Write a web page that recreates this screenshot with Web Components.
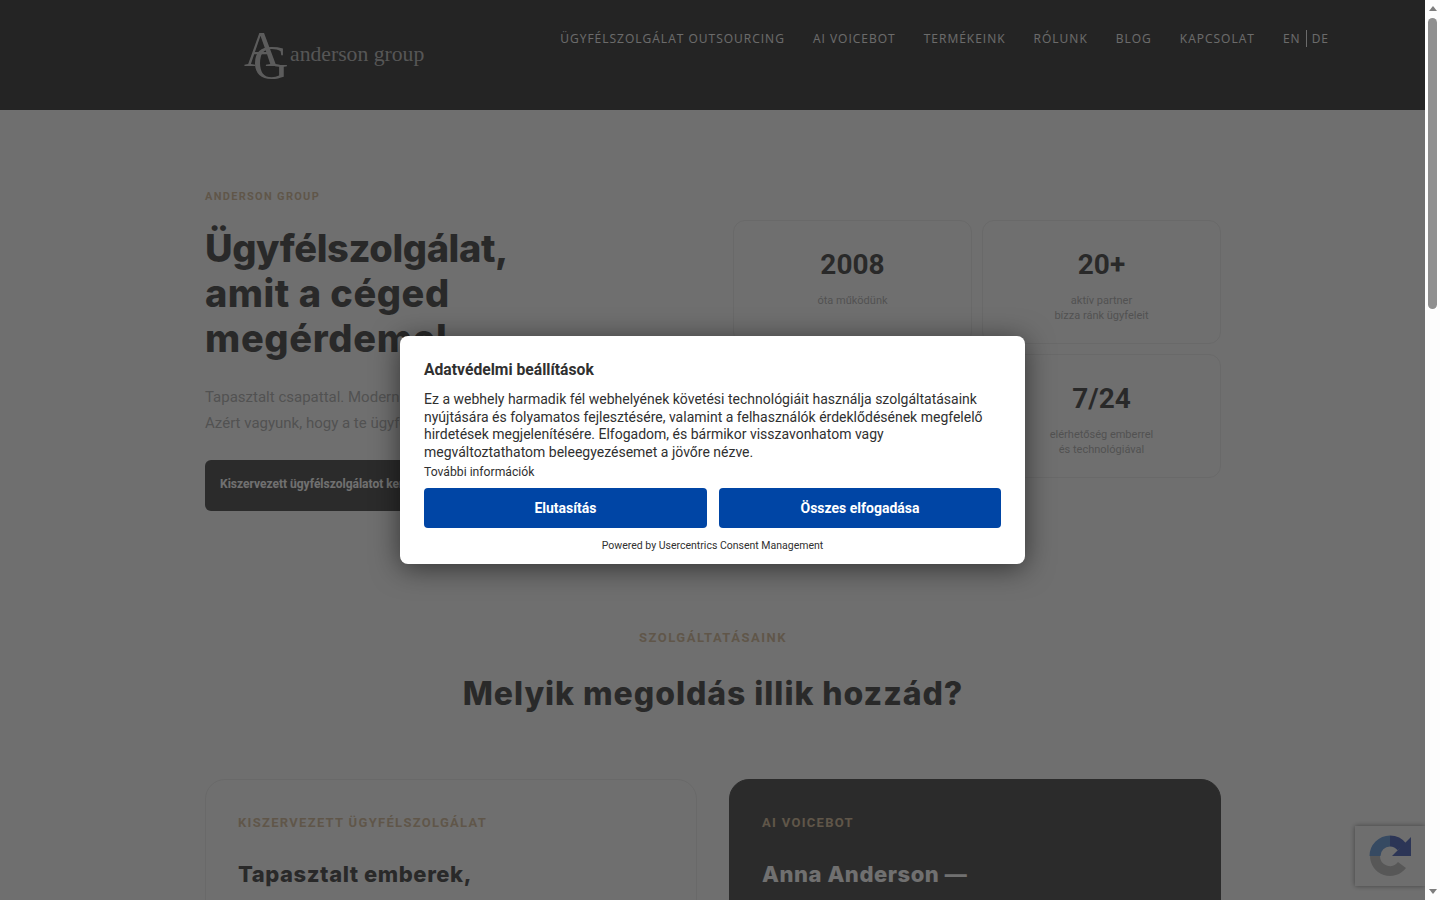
<!DOCTYPE html>
<html lang="hu">
<head>
<meta charset="utf-8">
<title>Anderson Group</title>
<style>
  html, body { margin: 0; height: 100%; overflow: hidden; background: #fff; }
</style>
</head>
<body>
<app-page>
  <site-header></site-header>
  <hero-section></hero-section>
  <services-section></services-section>
</app-page>

<script>
const HEAD_FONT = '"Inter", "Liberation Sans", sans-serif';

class AppPage extends HTMLElement {
  constructor() {
    super();
    this.attachShadow({ mode: "open" });
    this.shadowRoot.innerHTML = `
      <style>
        :host { display: flex; width: 1440px; height: 900px; overflow: hidden; font-family: Roboto, sans-serif; }
        .viewport { position: relative; width: 1425px; height: 900px; overflow: hidden; background: #fcfcfc; }
        .overlay { position: absolute; inset: 0; background: rgba(51,51,51,.7); }
      </style>
      <div class="viewport">
        <slot></slot>
        <recaptcha-badge></recaptcha-badge>
        <div class="overlay"></div>
        <consent-modal></consent-modal>
      </div>
      <page-scrollbar></page-scrollbar>
    `;
  }
}

class SiteHeader extends HTMLElement {
  constructor() {
    super();
    this.attachShadow({ mode: "open" });
    const links = ["ÜGYFÉLSZOLGÁLAT OUTSOURCING", "AI VOICEBOT", "TERMÉKEINK", "RÓLUNK", "BLOG", "KAPCSOLAT"];
    this.shadowRoot.innerHTML = `
      <style>
        :host { display: flex; justify-content: space-between; height: 110px; background: #000; padding: 0 96px 0 245px; box-sizing: border-box; }
        .logo { position: relative; width: 180px; height: 110px; font-family: "Liberation Serif", serif; color: #bdbdbd; }
        .logo span { position: absolute; line-height: 1; }
        .a { left: -1px; top: 24px; font-size: 50px; }
        .g { left: 8px; top: 38px; font-size: 49px; }
        .word { left: 45px; top: 44px; font-size: 21.7px; white-space: nowrap; color: #a8a8a8; }
        nav { display: flex; gap: 28px; padding-top: 30px; align-items: flex-start; font: 400 12px/17px "Open Sans", sans-serif; letter-spacing: 1px; color: #eee; }
        .lang { display: flex; }
        .lang span:first-child { padding-right: 5px; border-right: 1px solid #eee; }
        .lang span:last-child { padding-left: 5px; }
      </style>
      <div class="logo"><span class="a">A</span><span class="g">G</span><span class="word">anderson group</span></div>
      <nav>
        ${links.map(l => `<span>${l}</span>`).join("")}
        <div class="lang"><span>EN</span><span>DE</span></div>
      </nav>
    `;
  }
}

class StatCard extends HTMLElement {
  constructor() {
    super();
    this.attachShadow({ mode: "open" });
    this.shadowRoot.innerHTML = `
      <style>
        :host { display: block; box-sizing: border-box; height: 124px; padding: 27px 16px 0; border: 1px solid #e6e6e6; border-radius: 12px; text-align: center; }
        .num { font: 700 28px/34px Roboto, sans-serif; color: #111; min-height: 34px; }
        .label { margin-top: 11px; font: 400 11px/15px Roboto, sans-serif; color: #999; }
      </style>
      <div class="num"></div>
      <div class="label"><slot></slot></div>
    `;
  }
  connectedCallback() {
    this.shadowRoot.querySelector(".num").textContent = this.getAttribute("num") || "";
  }
}

class HeroSection extends HTMLElement {
  constructor() {
    super();
    this.attachShadow({ mode: "open" });
    this.shadowRoot.innerHTML = `
      <style>
        :host { display: flex; justify-content: space-between; box-sizing: border-box; height: 408px; padding: 81px 204px 0 205px; }
        .left { width: 500px; }
        .eyebrow { font: 700 11px/12px Roboto, sans-serif; letter-spacing: 1.3px; color: #c8a97e; }
        h1 { margin: 23px 0 0; font: 800 38px/45px ${HEAD_FONT}; color: #111; }
        h1 span { display: block; }
        p { margin: 23px 0 0; font: 400 15px/26px Roboto, sans-serif; color: #999; white-space: nowrap; }
        .cta { display: inline-block; box-sizing: border-box; margin-top: 24px; padding: 0 15px; height: 51px; width: 300px; border-radius: 6px; background: #1a1a1a; color: #fff; font: 700 12px/48px Roboto, sans-serif; white-space: nowrap; overflow: hidden; }
        .stats { display: grid; grid-template-columns: 239px 239px; gap: 10px; width: 488px; margin-top: 29px; align-content: start; }
      </style>
      <div class="left">
        <div class="eyebrow">ANDERSON GROUP</div>
        <h1><span style="letter-spacing:-.4px">Ügyfélszolgálat,</span><span style="letter-spacing:.5px">amit a céged</span><span style="letter-spacing:.65px">megérdemel</span></h1>
        <p>Tapasztalt csapattal. Modern<br>Azért vagyunk, hogy a te ügyfeleid</p>
        <a class="cta">Kiszervezett ügyfélszolgálatot keresek</a>
      </div>
      <div class="stats">
        <stat-card num="2008">óta működünk</stat-card>
        <stat-card num="20+">aktív partner<br>bízza ránk ügyfeleit</stat-card>
        <stat-card></stat-card>
        <stat-card num="7/24">elérhetőség emberrel<br>és technológiával</stat-card>
      </div>
    `;
  }
}

class ServiceCard extends HTMLElement {
  constructor() {
    super();
    this.attachShadow({ mode: "open" });
    this.shadowRoot.innerHTML = `
      <style>
        :host { display: block; box-sizing: border-box; height: 400px; padding: 36px 32px; border: 1px solid #e6e6e6; border-radius: 20px; color: #111; }
        :host([dark]) { background: #1a1a1a; border-color: #1a1a1a; color: #fff; }
        .tag { font: 700 13px/14px Roboto, sans-serif; letter-spacing: 1.3px; color: #c8a97e; }
        .title { margin-top: 30px; font: 800 22px/29px ${HEAD_FONT}; letter-spacing: .55px; }
      </style>
      <div class="tag"></div>
      <div class="title"><slot></slot></div>
    `;
  }
  connectedCallback() {
    this.shadowRoot.querySelector(".tag").textContent = this.getAttribute("tag");
  }
}

class ServicesSection extends HTMLElement {
  constructor() {
    super();
    this.attachShadow({ mode: "open" });
    this.shadowRoot.innerHTML = `
      <style>
        :host { display: block; padding: 113px 204px 0 205px; text-align: center; }
        .eyebrow { font: 700 13px/14px Roboto, sans-serif; letter-spacing: 1.5px; color: #c8a97e; }
        h2 { margin: 29px 0 0; font: 800 32px/40px ${HEAD_FONT}; letter-spacing: .95px; color: #111; }
        .grid { display: grid; grid-template-columns: 492px 492px; gap: 32px; margin-top: 65px; text-align: left; }
      </style>
      <div class="eyebrow">SZOLGÁLTATÁSAINK</div>
      <h2>Melyik megoldás illik hozzád?</h2>
      <div class="grid">
        <service-card tag="KISZERVEZETT ÜGYFÉLSZOLGÁLAT">Tapasztalt emberek,</service-card>
        <service-card dark tag="AI VOICEBOT">Anna Anderson —</service-card>
      </div>
    `;
  }
}

class ConsentModal extends HTMLElement {
  constructor() {
    super();
    this.attachShadow({ mode: "open" });
    this.shadowRoot.innerHTML = `
      <style>
        :host { position: absolute; left: 400px; top: 336px; width: 625px; height: 228px; box-sizing: border-box; padding: 24px 24px 0; background: #fff; border-radius: 8px; box-shadow: 0 4px 28px rgba(0,0,0,.55); color: #303030; font-family: Roboto, sans-serif; }
        h3 { margin: 0; font: 700 15.7px/19px Roboto, sans-serif; }
        p { margin: 12px 0 0; font: 400 14px/17.5px Roboto, sans-serif; white-space: nowrap; }
        .more { display: block; margin-top: 3px; font: 400 12.2px/17px Roboto, sans-serif; }
        .btns { display: flex; gap: 12px; margin-top: 7px; }
        button { flex: 1; height: 40px; border: 0; border-radius: 4px; background: #0045a5; color: #fff; font: 700 14px Roboto, sans-serif; }
        button:first-child { flex: 0 0 283px; }
        .powered { margin-top: 11px; text-align: center; font: 400 10.5px/13px Roboto, sans-serif; }
      </style>
      <h3>Adatvédelmi beállítások</h3>
      <p>Ez a webhely harmadik fél webhelyének követési technológiáit használja szolgáltatásaink<br>nyújtására és folyamatos fejlesztésére, valamint a felhasználók érdeklődésének megfelelő<br>hirdetések megjelenítésére. Elfogadom, és bármikor visszavonhatom vagy<br>megváltoztathatom beleegyezésemet a jövőre nézve.</p>
      <a class="more">További információk</a>
      <div class="btns"><button>Elutasítás</button><button>Összes elfogadása</button></div>
      <div class="powered">Powered by Usercentrics Consent Management</div>
    `;
  }
}

class RecaptchaBadge extends HTMLElement {
  constructor() {
    super();
    this.attachShadow({ mode: "open" });
    this.shadowRoot.innerHTML = `
      <style>
        :host { position: absolute; left: 1355px; top: 826px; width: 70px; height: 60px; background: #f9f9f9; box-shadow: 0 0 5px rgba(0,0,0,.6); display: flex; align-items: center; justify-content: center; }
        svg { display: block; width: 44px; height: 44px; }
      </style>
      <svg viewBox="0 0 44 44" fill="none">
        <path d="M7 22 A15 15 0 0 1 22 7" stroke="#3f7fd0" stroke-width="11"/>
        <path d="M22 7 A15 15 0 0 1 34 13" stroke="#1c3aa9" stroke-width="11"/>
        <path d="M43 3 L43 22 L24 22 Z" fill="#1c3aa9"/>
        <path d="M7 22 A15 15 0 0 0 34 31" stroke="#ababab" stroke-width="10"/>
      </svg>
    `;
  }
}

class PageScrollbar extends HTMLElement {
  constructor() {
    super();
    this.attachShadow({ mode: "open" });
    this.shadowRoot.innerHTML = `
      <style>
        :host { display: flex; flex-direction: column; align-items: center; width: 15px; height: 900px; background: #fdfdfd; }
        .up, .down { width: 0; height: 0; border-left: 4px solid transparent; border-right: 4px solid transparent; }
        .up { margin-top: 6px; border-bottom: 5px solid #7d7d7d; }
        .thumb { width: 9px; height: 291px; margin-top: 7px; border-radius: 5px; background: #8f8f8f; }
        .down { margin-top: auto; margin-bottom: 6px; border-top: 5px solid #7d7d7d; }
      </style>
      <div class="up"></div><div class="thumb"></div><div class="down"></div>
    `;
  }
}

customElements.define("app-page", AppPage);
customElements.define("site-header", SiteHeader);
customElements.define("stat-card", StatCard);
customElements.define("hero-section", HeroSection);
customElements.define("service-card", ServiceCard);
customElements.define("services-section", ServicesSection);
customElements.define("consent-modal", ConsentModal);
customElements.define("recaptcha-badge", RecaptchaBadge);
customElements.define("page-scrollbar", PageScrollbar);
</script>
</body>
</html>
